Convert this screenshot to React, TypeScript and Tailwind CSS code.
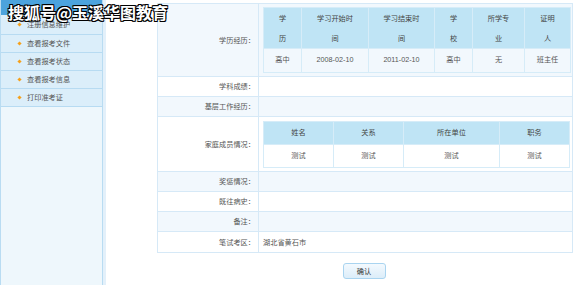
import React from 'react'

const menu = ['注册信息维护', '查看报考文件', '查看报考状态', '查看报考信息', '打印准考证']

const eduHead = [
  { t: '学历', w: 'w-[38px]', tw: 'w-[10px]' },
  { t: '学习开始时间', w: 'w-[67px]', tw: 'w-[38px]' },
  { t: '学习结束时间', w: 'w-[66px]', tw: 'w-[38px]' },
  { t: '学校', w: 'w-[38px]', tw: 'w-[10px]' },
  { t: '所学专业', w: 'w-[52px]', tw: 'w-[24px]' },
  { t: '证明人', w: 'w-[46px]', tw: 'w-[16px]' },
]
const eduRow = ['高中', '2008-02-10', '2011-02-10', '高中', '无', '班主任']

const famHead = [
  { t: '姓名', w: 'w-[70px]' },
  { t: '关系', w: 'w-[70px]' },
  { t: '所在单位', w: 'w-[96px]' },
  { t: '职务', w: 'w-[70px]' },
]

function Label({ text }: { text: string }) {
  return (
    <td className="w-[101px] border border-[#d6e9f7] pr-[3px] text-right align-middle text-[7.2px] text-[#555]">
      {text}：
    </td>
  )
}

export default function App() {
  return (
    <div className="relative flex h-[285px] w-[576px] overflow-hidden bg-white font-['Noto_Sans_CJK_SC',sans-serif]">
      {/* watermark */}
      <div className="absolute left-[8px] top-[2px] z-10 text-[16px] font-bold leading-[20px] text-white [text-shadow:1px_1px_0_#000,-1px_-1px_0_#000,1px_-1px_0_#000,-1px_1px_0_#000,0_1px_0_#000,0_-1px_0_#000]">
        搜狐号@玉溪华图教育
      </div>

      {/* sidebar */}
      <div className="flex w-[103px] flex-col border-x border-[#b9dcf2] bg-[#eef7fc]">
        <div className="h-[15px] bg-[#4ca3dd]" />
        {menu.map((m, i) => (
          <div
            key={m}
            className={`flex items-center gap-[6px] border-b border-[#b7dbf2] bg-[#dbeefa] pl-[17px] text-[7.2px] text-[#555] ${i === 0 ? 'h-[20px]' : 'h-[18px]'}`}
          >
            <span className="h-[3px] w-[3px] rotate-45 bg-[#f5a01a]" />
            {m}
          </div>
        ))}
      </div>
      <div className="w-[3px] bg-[#e3f0fa]" />

      {/* content */}
      <div className="flex flex-1 flex-col pl-[51px] pt-[3px]">
        <table className="w-[416px] table-fixed border-collapse text-[7.2px] text-[#555]">
          <tbody>
            <tr className="h-[72px] bg-[#f2f8fd]">
              <Label text="学历经历" />
              <td className="border border-[#d6e9f7] px-[4px] py-[3px]">
                <table className="w-[307px] table-fixed border-collapse text-center">
                  <tbody>
                    <tr className="h-[40px] bg-[#bfe4f5] text-[#444]">
                      {eduHead.map((h) => (
                        <td key={h.t} className={`${h.w} border border-[#d6ecf8] p-0`}>
                          <div className={`${h.tw} mx-auto leading-[20px]`}>{h.t}</div>
                        </td>
                      ))}
                    </tr>
                    <tr className="h-[24px] bg-[#f2f8fd]">
                      {eduRow.map((c, i) => (
                        <td key={i} className="border border-[#d6ecf8] font-['Liberation_Sans','Noto_Sans_CJK_SC',sans-serif]">
                          {c}
                        </td>
                      ))}
                    </tr>
                  </tbody>
                </table>
              </td>
            </tr>
            <tr className="h-[20px] bg-white">
              <Label text="学科成绩" />
              <td className="border border-[#d6e9f7]" />
            </tr>
            <tr className="h-[20px] bg-[#f2f8fd]">
              <Label text="基层工作经历" />
              <td className="border border-[#d6e9f7]" />
            </tr>
            <tr className="h-[55px] bg-white">
              <Label text="家庭成员情况" />
              <td className="border border-[#d6e9f7] px-[4px] py-[3px]">
                <table className="w-[306px] table-fixed border-collapse text-center">
                  <tbody>
                    <tr className="h-[23px] bg-[#bfe4f5] text-[#444]">
                      {famHead.map((h) => (
                        <td key={h.t} className={`${h.w} border border-[#d6ecf8]`}>
                          {h.t}
                        </td>
                      ))}
                    </tr>
                    <tr className="h-[23px] bg-white">
                      {famHead.map((h) => (
                        <td key={h.t} className="border border-[#d6ecf8]">
                          测试
                        </td>
                      ))}
                    </tr>
                  </tbody>
                </table>
              </td>
            </tr>
            <tr className="h-[20px] bg-[#f2f8fd]">
              <Label text="奖惩情况" />
              <td className="border border-[#d6e9f7]" />
            </tr>
            <tr className="h-[20px] bg-white">
              <Label text="既往病史" />
              <td className="border border-[#d6e9f7]" />
            </tr>
            <tr className="h-[20px] bg-[#f2f8fd]">
              <Label text="备注" />
              <td className="border border-[#d6e9f7]" />
            </tr>
            <tr className="h-[21px] bg-white">
              <Label text="笔试考区" />
              <td className="border border-[#d6e9f7] pl-[4px]">湖北省黄石市</td>
            </tr>
          </tbody>
        </table>

        <div className="mt-[10px] flex w-[416px] justify-center">
          <button className="ml-[-2px] h-[16px] w-[43px] rounded-[3px] border border-[#a9d4f0] bg-gradient-to-b from-[#f3f9fe] to-[#dcedf9] text-[7.2px] text-[#333]">
            确认
          </button>
        </div>
      </div>
    </div>
  )
}
